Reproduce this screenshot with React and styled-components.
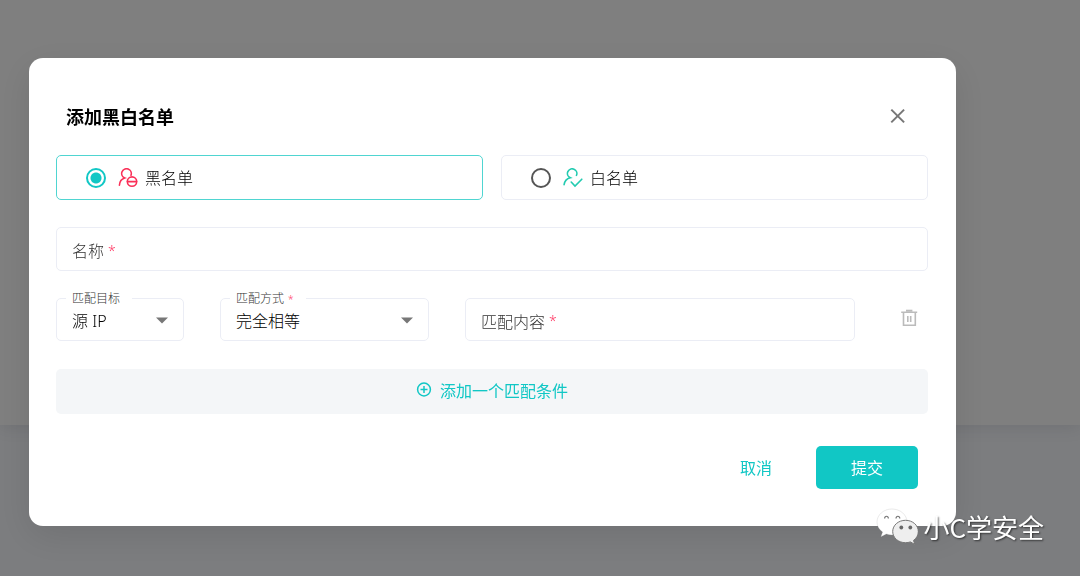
import React, { useState } from 'react'
import styled, { createGlobalStyle } from 'styled-components'

const GlobalStyle = createGlobalStyle`
  * {
    box-sizing: border-box;
  }
  body {
    margin: 0;
    font-family: 'Noto Sans', 'Noto Sans CJK SC', sans-serif;
    font-size: 16px;
    font-weight: 300;
    color: #000;
  }
  button, input, select {
    font: inherit;
    color: inherit;
    margin: 0;
  }
`
const Page = styled.div`
  min-height: 100vh;
  background: #f8fafe;
`
const Panel = styled.div`
  height: 425px;
  background: #fff;
  box-shadow: 0 2px 16px rgba(60, 60, 70, 0.12);
`
const Overlay = styled.div`
  position: fixed;
  top: 0;
  left: 0;
  width: 100%;
  height: 100%;
  overflow: auto;
  padding: 58px 124px 50px 29px;
  background: rgba(0, 0, 0, 0.5);
`
const Dialog = styled.form`
  display: flex;
  flex-direction: column;
  padding: 47px 28px 37px 27px;
  background: #fff;
  border-radius: 14px;
  box-shadow: 0 10px 36px rgba(0, 0, 0, 0.1);
`
const Header = styled.div`
  display: flex;
  align-items: center;
  justify-content: space-between;
  padding: 0 18px 0 10px;
  margin-bottom: 26px;
`
const Title = styled.h2`
  margin: 0;
  font-size: 18px;
  line-height: 24px;
  font-weight: 700;
  color: #000;
`
const IconButton = styled.button`
  display: flex;
  align-items: center;
  justify-content: center;
  width: ${props => props.$width};
  height: ${props => props.$height};
  padding: 0;
  border: 0;
  background: none;
  color: ${props => props.$color};
  cursor: pointer;
`
const Fields = styled.div`
  display: flex;
  flex-direction: column;
  gap: 27px;
`
const Options = styled.div`
  display: grid;
  grid-template-columns: 1fr 1fr;
  gap: 18px;
`
const Option = styled.label`
  display: flex;
  align-items: center;
  height: 45px;
  padding: 0 29px;
  border: 1px solid ${props => props.$checked ? '#4fd5d1' : '#ebedf5'};
  border-radius: 5px;
  cursor: pointer;
  svg {
    margin: 0 7px 0 12px;
  }
`
const OptionText = styled.span`
  padding-bottom: 2px;
`
const Radio = styled.input`
  appearance: none;
  flex: none;
  width: 20px;
  height: 20px;
  border: 2px solid #555;
  border-radius: 50%;
  &:checked {
    border-color: #11c7c5;
    background: radial-gradient(circle, #11c7c5 5px, #fff 6px);
  }
`
const Field = styled.div`
  position: relative;
  height: ${props => props.$height || '43px'};
`
const control = `
  display: block;
  width: 100%;
  height: 100%;
  padding: 0 15px;
  border: 1px solid #ebedf5;
  border-radius: 5px;
  background: #fff;
  outline: none;
`
const Input = styled.input`
  ${control}
  &:focus {
    border-color: #11c7c5;
  }
`
const Select = styled.select`
  ${control}
  appearance: none;
  padding-top: 2px;
`
const Placeholder = styled.label`
  position: absolute;
  top: 0;
  left: 16px;
  height: 100%;
  display: flex;
  align-items: center;
  gap: 4px;
  padding-top: 2px;
  color: #333;
  pointer-events: none;
`
const FloatingLabel = styled.label`
  position: absolute;
  top: -8px;
  left: 10px;
  display: flex;
  gap: 4px;
  padding: 0 12px 0 6px;
  font-size: 12px;
  line-height: 18px;
  color: #333;
  background: #fff;
`
const Required = styled.span`
  font-size: ${props => props.$small ? '10px' : '14px'};
  color: #ff3460;
`
const Arrow = styled.svg`
  position: absolute;
  top: 19px;
  right: 16px;
  pointer-events: none;
`
const Rule = styled.div`
  display: flex;
  align-items: flex-start;
  min-height: 44px;
`
const RuleFields = styled.div`
  flex: 1;
  display: grid;
  grid-template-columns: 128px 209px 1fr;
  gap: 36px;
  margin-right: 36px;
`
const AddButton = styled.button`
  display: flex;
  align-items: center;
  justify-content: center;
  gap: 8px;
  height: 45px;
  padding: 0 0 3px;
  border: 0;
  border-radius: 5px;
  background: #f4f6f8;
  color: #11c7c5;
  font-weight: 400;
  cursor: pointer;
`
const Footer = styled.div`
  display: flex;
  justify-content: flex-end;
  gap: 16px;
  padding-right: 10px;
  margin-top: 32px;
`
const Button = styled.button`
  width: ${props => props.$primary ? '102px' : '88px'};
  height: 43px;
  padding: 0 0 2px;
  border: 0;
  border-radius: 5px;
  background: ${props => props.$primary ? '#11c7c5' : 'none'};
  color: ${props => props.$primary ? '#fff' : '#11c7c5'};
  font-weight: 400;
  cursor: pointer;
`
const Watermark = styled.div`
  position: fixed;
  right: 36px;
  bottom: 29px;
  display: flex;
  align-items: center;
  gap: 5px;
  font-family: 'Noto Sans CJK SC', sans-serif;
  font-size: 26px;
  line-height: 40px;
  font-weight: 400;
  color: #fff;
  text-shadow: 1px 1px 2px rgba(0, 0, 0, 0.6);
`

function CloseIcon() {
  return (
    <svg width="24" height="24" viewBox="0 0 24 24" fill="none" stroke="currentColor" strokeWidth="2">
      <path d="M5.300 4.600l12.800 12.800M18.100 4.600L5.300 17.400" />
    </svg>
  )
}

function BlockedUserIcon() {
  return (
    <svg width="20" height="20" viewBox="0 0 20 20" fill="none" stroke="#fa3058" strokeWidth="1.6" strokeLinecap="round">
      <path d="M13 7.2A4.8 4.8 0 1 0 6.7 10C3.6 11 1.6 13.7 1.4 17.2" />
      <circle cx="14" cy="13.6" r="4.7" />
      <path d="M9.5 13.6h9" />
    </svg>
  )
}

function AllowedUserIcon() {
  return (
    <svg width="20" height="20" viewBox="0 0 20 20" fill="none" stroke="#22cbb0" strokeWidth="1.6" strokeLinecap="round">
      <path d="M13.5 7.3A4.7 4.7 0 1 0 7.3 9.8C4 10.6 1.6 13.2 1.1 16.6" />
      <path d="M8.200 14l3.800 4 6.800-6.800" />
    </svg>
  )
}

function TrashIcon() {
  return (
    <svg width="18" height="18" viewBox="0 0 18 18" fill="none" stroke="currentColor" strokeWidth="1.6">
      <path d="M.2 3.200h16M2.500 3.500v12.700h11.800V3.500M6.800 7v6M9.700 7v6" />
      <path d="M5 1.700h6.400" strokeWidth="2" />
    </svg>
  )
}

function PlusIcon() {
  return (
    <svg width="16" height="16" viewBox="0 0 16 16" fill="none" stroke="currentColor" strokeWidth="1.5">
      <circle cx="8" cy="7.5" r="6.4" />
      <path d="M8 4v7M4.5 7.5h7" />
    </svg>
  )
}

function ChatIcon() {
  return (
    <svg width="42" height="38" viewBox="0 0 42 38">
      <path d="M16 1C7.700 1 1 6.800 1 14c0 4.200 2.200 7.600 5.600 10l-1.700 4.800 5.500-2.900c1.700.6 3.600 1 5.600 1 8.300 0 15-5.800 15-12.900S24.300 1 16 1z" fill="#fff" stroke="#999" strokeOpacity=".35" strokeWidth=".6" />
      <path d="M8.600 10.500c.2-3 3.600-3 3.800 0M20 10.500c.2-3 3.600-3 3.800 0" fill="none" stroke="#777" strokeWidth="1.2" />
      <path d="M29.500 12.300c-7.200 0-12.800 5-12.800 11.200s5.600 11.200 12.800 11.200c1.800 0 3.400-.3 4.900-.8l4.400 2.500-1.300-4c3-2.100 4.800-5.200 4.800-8.900 0-6.200-5.600-11.200-12.800-11.200z" fill="#eee" stroke="#777" strokeWidth="1" />
      <circle cx="25.300" cy="19.500" r="1.900" fill="#666" />
      <circle cx="34.300" cy="19.500" r="1.900" fill="#666" />
    </svg>
  )
}

function SelectField(props) {
  return (
    <Field>
      <Select id={props.id}>
        {props.options.map(option => <option key={option}>{option}</option>)}
      </Select>
      <FloatingLabel htmlFor={props.id}>
        {props.label}
        {props.required && <Required $small>*</Required>}
      </FloatingLabel>
      <Arrow width="12" height="7" viewBox="0 0 12 7">
        <path d="M0 .5h12L6 6.500z" fill="#777" />
      </Arrow>
    </Field>
  )
}

function TextField(props) {
  const [value, setValue] = useState('')
  return (
    <Field $height={props.height}>
      <Input id={props.id} type="text" value={value} onChange={e => setValue(e.target.value)} />
      {!value && (
        <Placeholder htmlFor={props.id}>
          {props.label}
          <Required>*</Required>
        </Placeholder>
      )}
    </Field>
  )
}

function App() {
  const [list, setList] = useState('black')
  return (
    <>
      <GlobalStyle />
      <Page>
        <Panel />
      </Page>
      <Overlay>
        <Dialog role="dialog" aria-labelledby="dialog-title" onSubmit={e => e.preventDefault()}>
          <Header>
            <Title id="dialog-title">添加黑白名单</Title>
            <IconButton type="button" aria-label="关闭" $width="24px" $height="24px" $color="#777">
              <CloseIcon />
            </IconButton>
          </Header>
          <Fields>
            <Options>
              <Option $checked={list === 'black'}>
                <Radio type="radio" name="list" checked={list === 'black'} onChange={() => setList('black')} />
                <BlockedUserIcon />
                <OptionText>黑名单</OptionText>
              </Option>
              <Option $checked={list === 'white'}>
                <Radio type="radio" name="list" checked={list === 'white'} onChange={() => setList('white')} />
                <AllowedUserIcon />
                <OptionText>白名单</OptionText>
              </Option>
            </Options>
            <TextField id="name" label="名称" height="44px" />
            <Rule>
              <RuleFields>
                <SelectField id="target" label="匹配目标" options={['源 IP']} />
                <SelectField id="method" label="匹配方式" options={['完全相等']} required />
                <TextField id="content" label="匹配内容" />
              </RuleFields>
              <IconButton type="button" aria-label="删除" $width="37px" $height="40px" $color="#bbb">
                <TrashIcon />
              </IconButton>
            </Rule>
            <AddButton type="button">
              <PlusIcon />
              添加一个匹配条件
            </AddButton>
          </Fields>
          <Footer>
            <Button type="button">取消</Button>
            <Button type="submit" $primary>提交</Button>
          </Footer>
        </Dialog>
      </Overlay>
      <Watermark>
        <ChatIcon />
        小C学安全
      </Watermark>
    </>
  )
}

export default App
